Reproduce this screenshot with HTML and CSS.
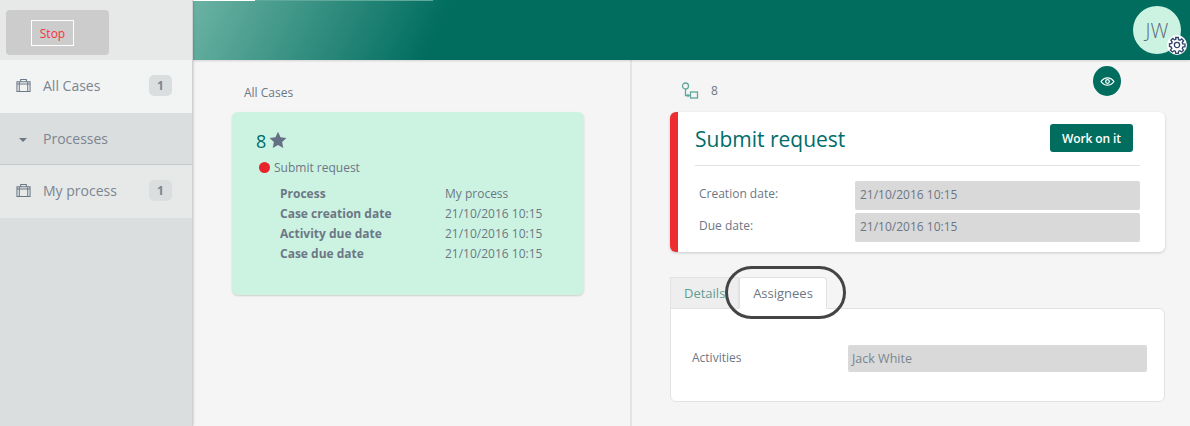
FILE: index.html
```html
<!DOCTYPE html>
<html lang="en">

<head>
    <meta charset="UTF-8">
    <meta name="viewport" content="width=device-width, initial-scale=1.0">
    <title>All Cases</title>
    <link rel="stylesheet" href="styles.css">
</head>

<body>
    <aside class="sidebar">
        <div class="side-top">
            <div class="stop-btn"><span class="stop-label">Stop</span></div>
        </div>
        <div class="side-item active">
            <svg class="case-icon" viewBox="0 0 16 16"><path d="M1 4h14v10.500H1zM5 4V1.500h6V4M3.500 4v10.500M12.500 4v10.500M1 6.500h14" /></svg>
            <span class="side-text">All Cases</span>
            <span class="count">1</span>
        </div>
        <div class="side-item group">
            <span class="caret"></span>
            <span class="side-text">Processes</span>
        </div>
        <div class="side-item plain">
            <svg class="case-icon" viewBox="0 0 16 16"><path d="M1 4h14v10.500H1zM5 4V1.500h6V4M3.500 4v10.500M12.500 4v10.500M1 6.500h14" /></svg>
            <span class="side-text">My process</span>
            <span class="count">1</span>
        </div>
    </aside>

    <div class="page">
        <header class="topbar">
            <div class="avatar">JW
                <span class="gear">
                    <svg viewBox="0 0 24 24"><path d="M12 8.500a3.500 3.500 0 1 0 0 7 3.500 3.500 0 0 0 0-7zM10.300 2h3.400l.5 2.900 1.700.7 2.400-1.700 2.400 2.400-1.700 2.400.7 1.700 2.900.5v3.400l-2.900.5-.7 1.700 1.700 2.400-2.400 2.400-2.400-1.700-1.700.7-.5 2.900h-3.400l-.5-2.900-1.700-.7-2.400 1.700-2.400-2.400 1.700-2.400-.7-1.700L2 13.700v-3.400l2.900-.5.7-1.700-1.700-2.400 2.400-2.400 2.400 1.700 1.700-.7z" /></svg>
                </span>
            </div>
        </header>

        <main class="columns">
            <section class="list-col">
                <p class="list-title">All Cases</p>
                <article class="case-card">
                    <div class="case-head">
                        <span class="case-num">8</span>
                        <svg class="star" viewBox="0 0 24 24"><path d="M12 1l3.400 7.300 7.900 1-5.800 5.500 1.500 7.900L12 18.800l-7 3.900 1.500-7.900L.7 9.300l7.900-1z" /></svg>
                    </div>
                    <div class="case-task"><span class="dot"></span>Submit request</div>
                    <dl class="case-info">
                        <dt>Process</dt><dd>My process</dd>
                        <dt>Case creation date</dt><dd>21/10/2016 10:15</dd>
                        <dt>Activity due date</dt><dd>21/10/2016 10:15</dd>
                        <dt>Case due date</dt><dd>21/10/2016 10:15</dd>
                    </dl>
                </article>
            </section>

            <section class="detail-col">
                <div class="detail-top">
                    <svg class="flow-icon" viewBox="0 0 18 17"><circle cx="4.500" cy="4" r="3" /><path d="M4.500 7v6.500h4" /><path class="flow-tip" d="M6.500 11.500l2.500 2-2.500 2z" /><rect x="9.500" y="10" width="7" height="6" /></svg>
                    <span>8</span>
                    <span class="eye-btn">
                        <svg viewBox="0 0 16 12"><path d="M1 6c3.500-5.300 10.500-5.300 14 0-3.500 5.300-10.500 5.300-14 0z" /><circle cx="8" cy="6" r="2" /></svg>
                    </span>
                </div>

                <div class="task-card">
                    <div class="task-head">
                        <h2>Submit request</h2>
                        <button class="work-btn">Work on it</button>
                    </div>
                    <div class="field">
                        <label>Creation date:</label>
                        <div class="value">21/10/2016 10:15</div>
                    </div>
                    <div class="field">
                        <label>Due date:</label>
                        <div class="value">21/10/2016 10:15</div>
                    </div>
                </div>

                <div class="tabs">
                    <div class="tab">Details</div>
                    <div class="tab current">Assignees</div>
                    <span class="ring"></span>
                </div>
                <div class="tab-panel">
                    <label>Activities</label>
                    <div class="value assignee">Jack White</div>
                </div>
            </section>
        </main>
    </div>
</body>

</html>
```

FILE: styles.css
```css
* {
    box-sizing: border-box;
}

html,
body {
    height: 100%;
}

body {
    margin: 0;
    display: flex;
    overflow: hidden;
    background-color: #f5f5f5;
    font-family: "Open Sans", sans-serif;
    font-size: 12px;
    color: #6c7785;
}

/* sidebar */
.sidebar {
    width: 193px;
    flex-shrink: 0;
    position: relative;
    z-index: 2;
    background-color: #dbdedf;
    border-right: 1px solid #ced1d2;
    box-shadow: 1px 0 2px rgba(0, 0, 0, 0.12);
}

.side-top {
    height: 60px;
    padding: 10px 83px 5px 6px;
    background-color: #e7e9e9;
}

.stop-btn {
    height: 45px;
    display: flex;
    align-items: center;
    padding-left: 25px;
    background-color: #cccccc;
    border-radius: 4px;
}

.stop-label {
    width: 43px;
    height: 26px;
    line-height: 26px;
    text-align: center;
    border: 1px solid #ffffff;
    color: #f5323f;
}

.side-item {
    display: flex;
    align-items: center;
    padding: 0 20px 0 16px;
    font-size: 14px;
    color: #7b8590;
}

.active {
    height: 53px;
    padding-bottom: 2px;
    background-color: #f2f4f4;
}

.group {
    height: 52px;
    background-color: #dbdedf;
    border-bottom: 1px solid #c8cbcc;
}

.plain {
    height: 53px;
    padding-bottom: 2px;
    background-color: #e7e9e9;
}

.case-icon {
    width: 15px;
    height: 15px;
    fill: none;
    stroke: #6c7785;
    stroke-width: 1.1;
}

.side-text {
    margin-left: 12px;
    flex: 1;
}

.caret {
    width: 0;
    height: 0;
    margin: 2px 1px 0 3px;
    border-style: solid;
    border-width: 4px 4px 0;
    border-color: #6c7785 transparent transparent;
}

.group .side-text {
    margin-left: 15px;
}

.count {
    width: 23px;
    height: 21px;
    line-height: 21px;
    text-align: center;
    border-radius: 5px;
    background-color: #dbdedf;
    font-size: 12px;
    font-weight: 700;
}

/* header */
.page {
    flex: 1;
    display: flex;
    flex-direction: column;
    min-width: 0;
}

.topbar {
    height: 60px;
    flex-shrink: 0;
    position: relative;
    display: flex;
    justify-content: flex-end;
    padding: 6px 9px 0 0;
    background: linear-gradient(116deg, #6cb3a4 0, #006d5f 234px);
    box-shadow: 0 1px 2px rgba(0, 0, 0, 0.15);
}

.topbar::before {
    content: "";
    position: absolute;
    top: 0;
    left: 0;
    width: 62px;
    height: 1px;
    background-color: #ffffff;
}

.topbar::after {
    content: "";
    position: absolute;
    top: 0;
    left: 62px;
    width: 178px;
    height: 1px;
    background-color: #5fa99b;
}

.avatar {
    width: 48px;
    height: 48px;
    position: relative;
    border-radius: 50%;
    background-color: #ccf3e2;
    text-align: center;
    line-height: 50px;
    font-size: 20px;
    font-weight: 300;
    color: #5f6b7a;
}

.gear {
    position: absolute;
    right: -6px;
    bottom: -1px;
    width: 20px;
    height: 20px;
    display: flex;
    align-items: center;
    justify-content: center;
    border-radius: 50%;
    background-color: #ffffff;
}

.gear svg {
    width: 18px;
    height: 18px;
    fill: none;
    stroke: #2f4468;
    stroke-width: 1.8;
}

/* columns */
.columns {
    flex: 1;
    display: flex;
    min-height: 0;
}

.list-col {
    width: 439px;
    flex-shrink: 0;
    padding: 0 46px 0 39px;
    border-right: 2px solid #e4e4e4;
}

.list-title {
    margin: 24px 0 11px 12px;
    line-height: 17px;
}

.case-card {
    height: 183px;
    padding: 17px 24px;
    background-color: #ccf3e2;
    border-radius: 6px;
    box-shadow: 0 1px 2px rgba(0, 0, 0, 0.16);
}

.case-head {
    display: flex;
    align-items: center;
    gap: 3px;
    height: 24px;
}

.case-num {
    font-size: 18px;
    color: #006d6a;
}

.star {
    width: 18px;
    height: 18px;
    margin-bottom: 3px;
    fill: #667085;
}

.case-task {
    display: flex;
    align-items: center;
    margin: 4px 0 0 3px;
    height: 20px;
}

.dot {
    width: 11px;
    height: 11px;
    margin-right: 4px;
    border-radius: 50%;
    background-color: #e8232b;
}

.case-info {
    display: grid;
    grid-template-columns: 165px 1fr;
    grid-auto-rows: 20px;
    align-items: center;
    margin: 6px 0 0 24px;
}

.case-info dt {
    font-weight: 700;
}

.case-info dd {
    margin: 0;
}

/* detail */
.detail-col {
    flex: 1;
    padding: 0 25px 0 38px;
    position: relative;
}

.detail-top {
    display: flex;
    align-items: center;
    gap: 12px;
    height: 52px;
    padding: 8px 0 0 11px;
}

.flow-icon {
    width: 18px;
    height: 17px;
    fill: none;
    stroke: #5fa79a;
    stroke-width: 1.3;
}

.flow-tip {
    fill: #5fa79a;
    stroke: none;
}

.eye-btn {
    position: absolute;
    top: 6px;
    left: 461px;
    width: 28px;
    height: 30px;
    display: flex;
    align-items: center;
    justify-content: center;
    border-radius: 50%;
    background-color: #006d5f;
}

.eye-btn svg {
    width: 15px;
    height: 11px;
    fill: none;
    stroke: #ffffff;
    stroke-width: 1.4;
}

.task-card {
    height: 140px;
    padding: 0 25px 0 17px;
    background-color: #ffffff;
    border-left: 8px solid #ee2d30;
    border-radius: 6px;
    box-shadow: 0 1px 3px rgba(0, 0, 0, 0.18);
}

.task-head {
    height: 54px;
    display: flex;
    align-items: center;
    justify-content: space-between;
    padding-right: 7px;
    margin-bottom: 15px;
    border-bottom: 1px solid #e2e2e2;
}

.task-head h2 {
    margin: 0;
    font-size: 21px;
    font-weight: 400;
    color: #006d6a;
}

.work-btn {
    width: 83px;
    height: 28px;
    margin-bottom: 1px;
    padding: 0;
    border: none;
    border-radius: 3px;
    background-color: #006d5f;
    color: #ffffff;
    font-family: inherit;
    font-size: 12px;
    font-weight: 600;
    letter-spacing: -0.1px;
}

.field {
    display: flex;
    align-items: center;
    margin-bottom: 3px;
    padding-left: 4px;
}

.field label {
    width: 156px;
    margin-bottom: 4px;
}

.value {
    flex: 1;
    height: 29px;
    line-height: 27px;
    padding-left: 5px;
    background-color: #d9d9d9;
    border-radius: 2px;
}

.tabs {
    display: flex;
    position: relative;
    height: 31px;
    margin-top: 25px;
    z-index: 1;
}

.tab {
    height: 32px;
    line-height: 30px;
    font-size: 13px;
    border: 1px solid #e2e2e2;
}

.tab:first-child {
    width: 69px;
    padding-left: 13px;
    background-color: #eeeeee;
    color: #5f9d92;
}

.tab.current {
    width: 88px;
    text-align: center;
    background-color: #ffffff;
    border-bottom-color: #ffffff;
    border-radius: 3px 3px 0 0;
}

.ring {
    position: absolute;
    top: -11px;
    left: 55px;
    width: 121px;
    height: 53px;
    border: 3px solid #444444;
    border-radius: 27px;
}

.tab-panel {
    display: flex;
    align-items: center;
    height: 94px;
    padding: 6px 17px 0 21px;
    background-color: #ffffff;
    border: 1px solid #e2e2e2;
    border-radius: 0 6px 6px 6px;
}

.tab-panel label {
    width: 156px;
    margin-bottom: 2px;
}

.assignee {
    height: 27px;
    line-height: 27px;
    padding-left: 4px;
    font-size: 12.5px;
    color: #7b8590;
}
```
